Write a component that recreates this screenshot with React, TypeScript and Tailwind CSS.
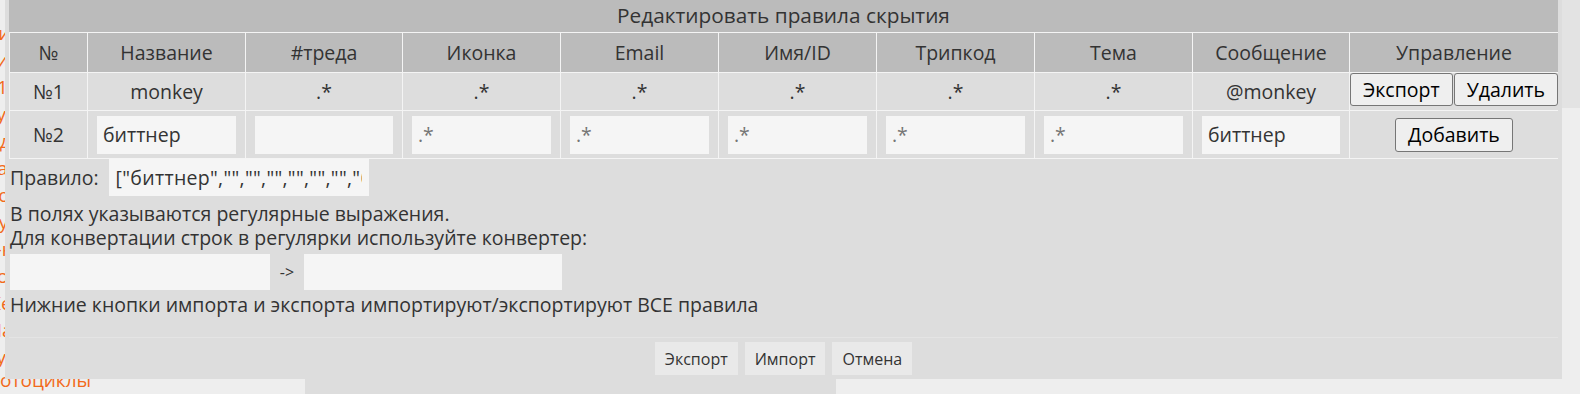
const font = { fontFamily: '"Open Sans", "DejaVu Sans", sans-serif' };

const headers = ["№", "Название", "#треда", "Иконка", "Email", "Имя/ID", "Трипкод", "Тема", "Сообщение", "Управление"];

const row1 = ["№1", "monkey", ".*", ".*", ".*", ".*", ".*", ".*", "@monkey"];

const row2Inputs: { value?: string; placeholder?: string }[] = [
  { value: "биттнер" },
  {},
  { placeholder: ".*" },
  { placeholder: ".*" },
  { placeholder: ".*" },
  { placeholder: ".*" },
  { placeholder: ".*" },
  { value: "биттнер" },
];

// sidebar of the page behind the dialog, only its left edge shows
const menu = [
  "Линии",
  "Кино",
  "A1",
  "Рукоделие",
  "Одежда",
  "Вазы",
  "Лодки",
  "Путешествия",
  "E-книги",
  "Собаки",
  "Железо",
  "Машины",
  "Кухня",
];

const grid =
  "grid grid-cols-[77px_157px_156px_157px_157px_157px_157px_157px_156px_1fr] gap-px";

const fieldCls =
  "bg-[#f5f5f5] text-[#333] outline-none placeholder:text-[#757575] text-[19.5px]";

const RuleButton = ({ label }: { label: string }) => (
  <button className="h-[33px] px-[12px] rounded-[3px] border border-[#767676] bg-[#efefef] text-black text-[19.5px] leading-none">
    {label}
  </button>
);

const PaneButton = ({ label }: { label: string }) => (
  <button className="h-[33px] px-[10px] bg-[#e9e9e9] text-[#333] text-[16px] leading-none">
    {label}
  </button>
);

export default function App() {
  return (
    <div className="relative w-[1580px] h-[394px] overflow-hidden bg-[#eeeeee] flex" style={font}>
      {/* page behind the dialog */}
      <div className="w-[305px] pt-[20px] flex flex-col">
        <div className="w-[5px] overflow-hidden">
          {menu.map((m) => (
            <div key={m} className="h-[27px] leading-[27px] text-[19px] text-[#f26a1b] ml-[-15px] whitespace-nowrap">
              {m}
            </div>
          ))}
        </div>
        <div className="h-[27px] leading-[27px] text-[19px] text-[#f26a1b] ml-[-17px] whitespace-nowrap">
          Мотоциклы
        </div>
      </div>
      <div className="w-[531px] h-full bg-[#dddddd]" />
      <div className="flex-1 flex justify-end">
        <div className="w-[18px] h-[108px] bg-[#e3e3e3]" />
      </div>

      {/* dialog */}
      <div className="absolute left-[5px] top-0 w-[1557px] h-[379px] bg-[#dddddd] px-[4px] flex flex-col text-[#333] text-[19.5px]">
        <div className="h-[32px] bg-[#bbbbbb] flex items-center justify-center text-[20.8px]">
          Редактировать правила скрытия
        </div>

        <div className={`${grid} bg-[#f4f4f4] p-px`}>
          {headers.map((h) => (
            <div key={h} className="h-[39px] bg-[#bbbbbb] flex items-center justify-center">
              {h}
            </div>
          ))}

          {row1.map((c, i) => (
            <div key={i} className="h-[37px] bg-[#dddddd] flex items-center justify-center">
              {c}
            </div>
          ))}
          <div className="h-[37px] bg-[#dddddd] flex items-start justify-center gap-px">
            <RuleButton label="Экспорт" />
            <RuleButton label="Удалить" />
          </div>

          <div className="h-[47px] bg-[#dddddd] flex items-center justify-center">№2</div>
          {row2Inputs.map((f, i) => (
            <div key={i} className="h-[47px] bg-[#dddddd] flex items-center px-[9px]">
              <input
                className={`${fieldCls} w-full h-[38px] px-[6px]`}
                defaultValue={f.value}
                placeholder={f.placeholder}
              />
            </div>
          ))}
          <div className="h-[47px] bg-[#dddddd] flex items-center justify-center">
            <button className="h-[34px] px-[12px] rounded-[3px] border border-[#767676] bg-[#efefef] text-black text-[19.5px] leading-none">
              Добавить
            </button>
          </div>
        </div>

        <div className="flex items-center gap-[10px] pl-px">
          <span>Правило:</span>
          <input
            className={`${fieldCls} w-[260px] h-[37px] px-[7px] tracking-[0.3px]`}
            defaultValue={'["биттнер","","","","","","","биттнер"]'}
          />
        </div>

        <div className="mt-[6px] pl-px leading-[24px]">
          <div>В полях указываются регулярные выражения.</div>
          <div>Для конвертации строк в регулярки используйте конвертер:</div>
        </div>

        <div className="mt-[4px] pl-px flex items-center">
          <input className={`${fieldCls} w-[260px] h-[36px] px-[6px]`} />
          <span className="w-[34px] text-center text-[16px]">-&gt;</span>
          <input className={`${fieldCls} w-[258px] h-[36px] px-[6px]`} />
        </div>

        <div className="mt-[3px] pl-px leading-[24px]">
          Нижние кнопки импорта и экспорта импортируют/экспортируют ВСЕ правила
        </div>

        <div className="mt-auto border-t border-[#e4e4e4] py-[4px] flex justify-center gap-[7px]">
          <PaneButton label="Экспорт" />
          <PaneButton label="Импорт" />
          <PaneButton label="Отмена" />
        </div>
      </div>
    </div>
  );
}
